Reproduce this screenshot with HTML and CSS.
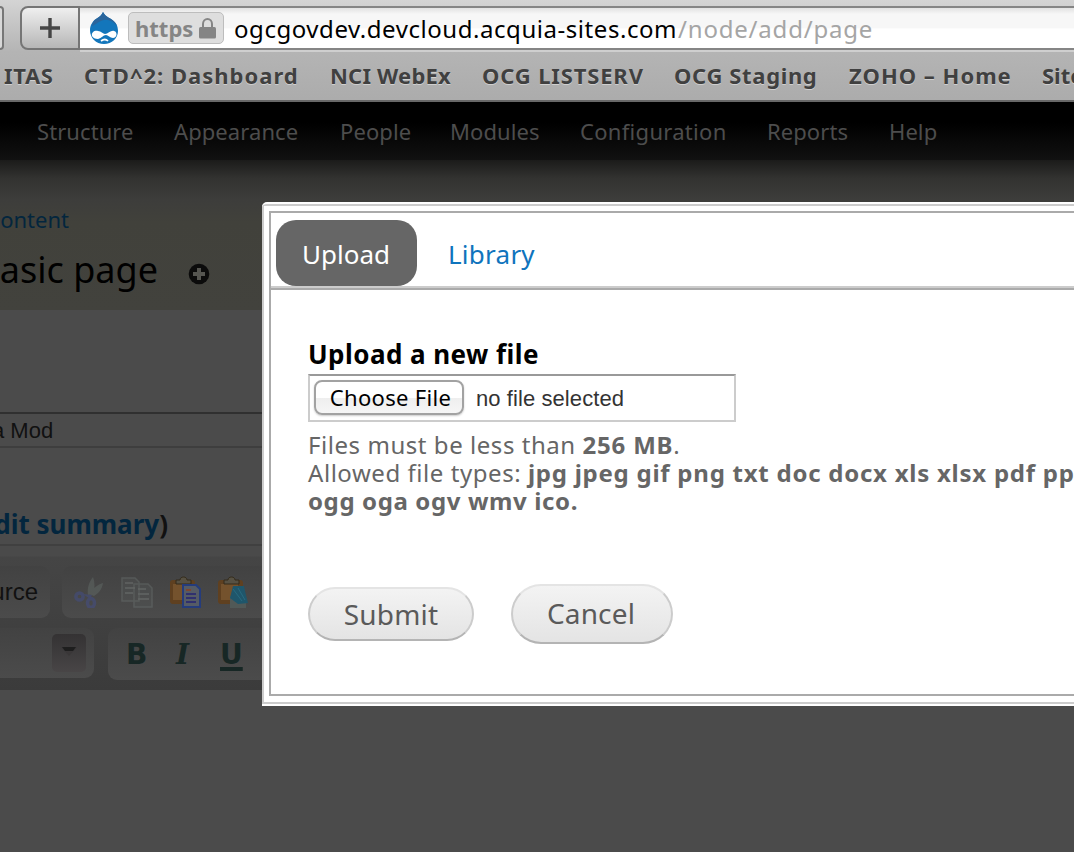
FILE: index.html
```html
<!DOCTYPE html>
<html lang="en">
<head>
<meta charset="utf-8">
<title>Add Basic page</title>
<link rel="stylesheet" href="styles.css">
</head>
<body>
<header class="browser">
  <div class="addressbar">
    <span class="prev-button"></span>
    <button class="add-button" aria-label="Add bookmark"><svg width="20" height="20" viewBox="0 0 20 20"><path d="M10 0v20M0 10h20" stroke="#454545" stroke-width="3.4"/></svg></button>
    <div class="url">
      <svg class="drop" width="30" height="34" viewBox="0 0 30 34"><path d="M14 1c2 4 5 5 8 7 5 3 7 7 7 12 0 7-6 13-14 13S1 27 1 19c0-5 3-9 6-11s6-4 7-7z" fill="#1376bb"/><path d="M14 1c2 4 5 5 8 7 3 2 5 4 6 7-4-5-9-7-13-6-5 1-9 5-12 6 0-3 2-6 4-7 3-2 6-4 7-7z" fill="#2a659c"/><path d="M3 25c-1-4 3-6 6-5 3 0 5 3 7 3 3 0 6-4 9-3 4 1 3 7-1 7-3 0-5-3-7-3-3 0-4 3-8 4-3 0-5-1-6-3z" fill="#fff"/><path d="M12 30q4-3 7 0" fill="none" stroke="#fff" stroke-width="1.7"/></svg>
      <span class="secure"><span class="https">https</span><svg width="17" height="21" viewBox="0 0 17 21"><path d="M4 9V6a4.500 5 0 0 1 9 0v3" fill="none" stroke="#858585" stroke-width="2"/><rect x="0" y="9" width="17" height="11.500" rx="1.500" fill="#858585"/></svg></span>
      <span class="domain">ogcgovdev.devcloud.acquia-sites.com</span><span class="path">/node/add/page</span>
    </div>
  </div>
  <nav class="bookmarks"><span class="b1">ITAS</span><span class="b2">CTD^2: Dashboard</span><span class="b3">NCI WebEx</span><span class="b4">OCG LISTSERV</span><span class="b5">OCG Staging</span><span class="b6">ZOHO – Home</span><span class="b7">Sites</span></nav>
</header>
<nav class="admin-menu"><span>Structure</span><span>Appearance</span><span>People</span><span>Modules</span><span class="m5">Configuration</span><span>Reports</span><span>Help</span></nav>
<section class="branding">
  <div class="crumb"><span>Content</span></div>
  <div class="title-row"><h1 class="page-title"><span>Basic page</span></h1>
  <svg class="shortcut" width="22" height="22" viewBox="0 0 22 22"><circle cx="11" cy="11" r="10.300" fill="#0b0b0b"/><path d="M11 5v12M5 11h12" stroke="#555550" stroke-width="4"/></svg></div>
</section>
<main class="node-form">
  <div class="title-field"><span class="field-text">a Mod</span></div>
  <div class="summary"><span><a>Edit summary</a>)</span></div>
  <div class="editor">
    <div class="tool-row">
      <div class="tools source"><span>Source</span></div>
      <div class="tools icons">
        <svg class="cut" viewBox="0 0 32 32"><path d="M19 1c-4 5-6 11-5 18l5-1c2-6 2-12 0-17zM29 7c-6 2-11 6-14 11l5 2c5-3 8-7 9-13z" fill="#68736f"/><g fill="none" stroke="#42509c" stroke-width="3.500"><circle cx="5.500" cy="20.500" r="3.600"/><ellipse cx="17" cy="27" rx="3.500" ry="4.500"/></g><path d="m9 18 9 1-2 4z" fill="#42509c"/></svg>
        <svg class="copy" viewBox="0 0 32 32"><g fill="#565a5a" stroke="#7d8986" stroke-width="1.500"><path d="M1 2h13l4 4v19H1zM13 8h14l4 4v19H13z"/></g><path d="M4 7h8m-8 5h10M4 17h8m5-4h8m-8 5h11m-11 5h11" stroke="#a1aaa6" stroke-width="1.700"/></svg>
        <svg viewBox="1 0 32 32"><rect x="1" y="4" width="25" height="24" rx="3" fill="#5f4020"/><path d="M4 8h17v16H4z" fill="#74522d"/><path d="M7 8V4h4c0-4 7-4 7 0h4v4z" fill="#575143" stroke="#342b1a"/><path d="M14 9h13l4 4v18H14z" fill="#555b65" stroke="#253c7c" stroke-width="2"/><path d="M17 18h10m-10 4h10m-10 4h10" stroke="#30306e" stroke-width="2"/><path d="M17 14h5" stroke="#7f4630" stroke-width="2"/></svg>
        <svg viewBox="1 0 32 32"><rect x="1" y="4" width="25" height="24" rx="3" fill="#5f4020"/><path d="M4 8h17v16H4z" fill="#74522d"/><path d="M7 8V4h4c0-4 7-4 7 0h4v4z" fill="#575143" stroke="#342b1a"/><path d="M13 20h16v12H13z" fill="#515957"/><path d="M16 10h11l1 5 3 12-10 1-8-6z" fill="#1f566b"/><path d="m16 13 9 12m-4-13 7 12" stroke="#286b80"/></svg>
      </div>
    </div>
    <div class="tool-row">
      <div class="tools format"><span class="arrow"><svg width="16" height="9" viewBox="0 0 16 9"><path d="M0 0h16L8 9z" fill="#3a3738"/><path d="M1 0h14l-3 4H4z" fill="#1e1e1e"/></svg></span></div>
      <div class="tools styles"><b>B</b><i>I</i><u>U</u></div>
    </div>
  </div>
</main>
<div class="modal">
  <div class="modal-frame"><div class="modal-inner">
    <div class="tabs"><span class="tab active">Upload</span><span class="tab library">Library</span></div>
    <div class="upload-form">
      <label class="file-label">Upload a new file</label>
      <div class="file-input"><button class="choose">Choose File</button><span class="no-file">no file selected</span></div>
      <div class="help"><div>Files must be less than <b class="size">256 MB</b>.</div><div>Allowed file types: <b class="types">jpg jpeg gif png txt doc docx xls xlsx pdf pp</b></div><div><b class="more">ogg oga ogv wmv ico.</b></div></div>
      <div class="actions"><button class="pill">Submit</button><button class="pill cancel">Cancel</button></div>
    </div>
  </div></div>
</div>
</body>
</html>
```
FILE: styles.css
```css
* { box-sizing: border-box; }
body { margin: 0; width: 1074px; height: 852px; overflow: hidden; position: relative; background: #4b4b4b; font-family: "Noto Sans", sans-serif; white-space: nowrap; }
button { font: inherit; padding: 0; }
.browser { height: 102px; background: linear-gradient(#d4d4d4 0, #b4b4b4 52px, #acacac 99px); border-bottom: 2px solid #686868; overflow: hidden; }
.addressbar { height: 51px; padding-top: 6px; display: flex; }
.prev-button { width: 4px; height: 44px; border: 2px solid #777; border-left: 0; border-radius: 0 6px 6px 0; margin-right: 16px; background: #d8d8d8; }
.add-button { width: 60px; height: 44px; border: 2px solid #757575; border-radius: 8px 0 0 8px; background: linear-gradient(#efefef, #b6b6b6); display: flex; align-items: center; justify-content: center; }
.url { flex: 1; height: 44px; border-top: 2px solid #858585; border-bottom: 2px solid #858585; background: linear-gradient(#e2e2e2 0, #f7f7f7 6px, #f7f7f7 50%, #fff 52%); display: flex; align-items: center; padding-left: 9px; box-shadow: 0 2px #cfcfcf; }
.secure { width: 96px; height: 32px; margin: 0 10px 0 9px; border: 1px solid #bdbdbd; border-radius: 5px; background: #dedede; display: flex; align-items: center; padding-left: 6px; gap: 6px; }
.https { font-weight: 700; font-size: 22px; color: #858585; }
.domain, .path { font-size: 24px; line-height: 40px; letter-spacing: .55px; padding-top: 1px; }
.path { color: #a5a5a5; letter-spacing: .8px; padding-left: 1px; }
.bookmarks { display: grid; grid-template-columns: 80px 246px 152px 192px 175px 193px 90px; padding-left: 4px; font-weight: 700; font-size: 22px; line-height: 49px; color: #404040; text-shadow: 0 1px #d0d0d0; }
.bookmarks span, .admin-menu span { justify-self: start; }
.b1 { letter-spacing: .6px; }
.b2, .b6 { letter-spacing: 1px; }
.b3 { letter-spacing: .2px; }
.b4 { letter-spacing: .85px; }
.b5 { letter-spacing: .65px; }
.admin-menu { height: 58px; background: linear-gradient(#000 35%, #111); display: grid; grid-template-columns: 137px 166px 110px 130px 187px 122px 100px; padding-left: 37px; font-size: 22px; line-height: 58px; letter-spacing: .08px; color: #4d4d4d; }
.m5 { letter-spacing: .3px; }
.branding { height: 150px; background: linear-gradient(#1b1b1a, #323230 18px, #3d3d3b 40px, #41413b 62px, #42423d); }
.crumb { width: 69px; padding-top: 43px; display: flex; justify-content: flex-end; font-size: 22px; line-height: 32px; color: #03263e; }
.title-row { display: flex; align-items: center; padding-top: 11px; gap: 30px; }
.shortcut { margin-top: 7px; }
.page-title { width: 158px; margin: 0; display: flex; justify-content: flex-end; font-size: 36px; line-height: 48px; font-weight: 400; }
.node-form { width: 262px; padding-top: 102px; color: #111; }
.title-field { height: 36px; width: 262px; border-top: 2px solid #303030; border-bottom: 2px solid #3e3e3e; font: 22px/34px "Liberation Sans", sans-serif; }
.field-text { display: inline-block; margin-left: -8px; }
.summary { width: 168px; height: 96px; padding-top: 59px; display: flex; justify-content: flex-end; font-weight: 700; font-size: 26px; line-height: 35px; }
.summary a { color: #03263e; }
.editor { height: 146px; border-top: 2px solid #404040; padding-top: 20px; background: linear-gradient(#4a4a4a 10px, #454545 11px, #3b3b3b); display: flex; flex-direction: column; gap: 10px; }
.tool-row { display: flex; gap: 12px; height: 52px; }
.tools { height: 52px; background: linear-gradient(#424242, #4b4b4b); }
.source { width: 50px; border-radius: 0 9px 9px 0; display: flex; justify-content: flex-end; padding-right: 12px; font: 24px/52px "Liberation Sans", sans-serif; }
.icons { flex: 1; border-radius: 9px 0 0 9px; padding: 10px 0 0 12px; display: flex; gap: 16px; }
.icons svg { width: 32px; height: 32px; flex: none; }
.cut { opacity: .4; }
.icons .copy { margin: 0 1px 0 -1px; opacity: .3; }
.format { width: 94px; height: 50px; border-radius: 0 9px 9px 0; padding: 6px 0 0 52px; margin-right: 2px; }
.arrow { width: 34px; height: 38px; border-radius: 5px; background: linear-gradient(#343233, #484546); display: flex; justify-content: center; padding-top: 13px; }
.styles { flex: 1; border-radius: 9px 0 0 9px; padding-left: 18px; display: grid; grid-template-columns: 50px 44px 40px; font: 700 28px/54px "DejaVu Sans", sans-serif; color: #172725; }
.styles i { font-family: "DejaVu Serif", serif; }
.styles u { text-decoration-thickness: 4px; text-underline-offset: 3px; text-decoration-skip-ink: none; }
.modal { position: absolute; left: 262px; top: 202px; width: 812px; height: 504px; border: solid #fff; border-width: 2px 0; border-radius: 5px 0 0 0; background: #fff; overflow: hidden; }
.modal-frame { height: 500px; border: 2px solid #ccc; border-right: 0; padding: 5px 0 5px 5px; }
.modal-inner { height: 485px; border: 2px solid #aaa; border-right: 0; }
.tabs { height: 77px; border-bottom: 2px solid #aaa; box-shadow: inset 0 -2px #ccc; display: flex; padding: 7px 0 0 5px; font-size: 26px; line-height: 68px; color: #0f74bd; gap: 31px; }
.active { width: 141px; height: 66px; border-radius: 20px; background: #666; color: #fff; padding-left: 26px; }
.library { letter-spacing: .25px; }
.upload-form { padding: 46px 0 0 37px; }
.file-label { display: block; height: 38px; font-size: 26px; line-height: 37px; font-weight: 700; letter-spacing: .45px; }
.file-input { width: 428px; height: 48px; border: 2px solid #ccc; border-top-color: #999; display: flex; align-items: center; padding: 0 0 2px 4px; gap: 12px; font: 22px/30px "Liberation Sans", sans-serif; color: #333; }
.choose { width: 150px; height: 35px; border: 2px solid #a2a2a2; border-radius: 8px; background: linear-gradient(#fff 50%, #eee 52%, #f6f6f6); font: 22px/28px "Noto Sans", sans-serif; letter-spacing: .3px; padding-left: 3px; box-shadow: 0 1px 2px #ccc; color: #000; }
.no-file { padding-top: 3px; letter-spacing: .08px; }
.help { padding-top: 9px; font-size: 24px; line-height: 28px; letter-spacing: .55px; color: #666; white-space: pre; }
.size { letter-spacing: .8px; }
.types { letter-spacing: .75px; }
.more { letter-spacing: .62px; }
.actions { padding-top: 69px; display: flex; align-items: center; gap: 37px; }
.pill { width: 166px; height: 54px; margin-top: -1px; border: 2px solid #ccc; border-top-color: #e4e4e4; border-bottom-color: #b4b4b4; border-radius: 30px; background: linear-gradient(#f3f3f3, #e4e4e4); color: #5a5a5a; font-size: 28px; line-height: 46px; padding-bottom: 0; letter-spacing: .15px; }
.cancel { width: 162px; height: 60px; margin-top: 0; padding: 0 2px 2px 0; }
```
